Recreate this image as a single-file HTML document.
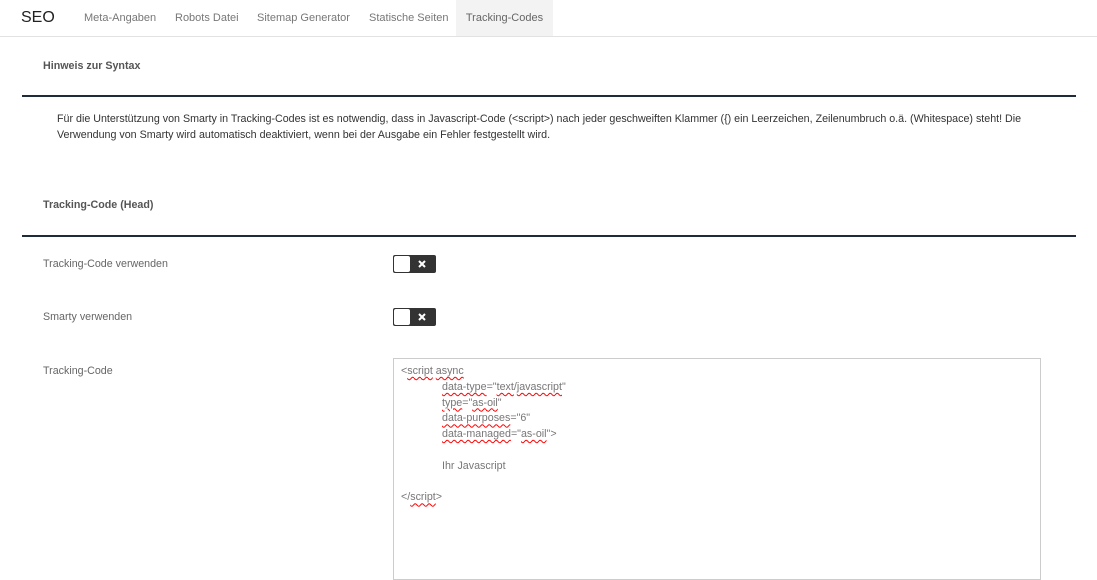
<!DOCTYPE html>
<html><head><style>
body{margin:0;width:1097px;height:572px;overflow:hidden;background:#fff;font-family:"Liberation Sans",sans-serif;color:#666;font-size:10.7px;position:relative}
.a{position:absolute;white-space:nowrap}
.nav{position:absolute;left:0;top:0;width:1097px;height:36px;border-bottom:1px solid #e2e2e2}
.tab{position:absolute;top:0;height:36px;line-height:36px;font-size:11px;color:#777}
.h{font-weight:bold;color:#555;font-size:10.7px}
.line{position:absolute;left:22px;width:1054px;height:2px;background:#1d2b3a}
.tg{position:absolute;left:393px;width:43px;height:18px;background:#333;border-radius:2px}
.tg:before{content:"";position:absolute;left:1px;top:1px;width:16px;height:16px;background:#fff;border-radius:2px}
.tg svg{position:absolute;left:25px;top:5px}
.ta{position:absolute;left:393px;top:358px;width:646px;height:220px;border:1px solid #ccc;font-size:10.7px;color:#777;line-height:15.8px}
.w{text-decoration:underline wavy red;text-decoration-thickness:1px;text-underline-offset:2px}
.i{padding-left:41px}
</style></head><body>
<div class="nav"></div>
<div class="a" style="left:21px;top:9px;font-size:16px;color:#222">SEO</div>
<div class="tab" style="left:84px">Meta-Angaben</div>
<div class="tab" style="left:175px">Robots Datei</div>
<div class="tab" style="left:257px">Sitemap Generator</div>
<div class="tab" style="left:369px">Statische Seiten</div>
<div class="tab" style="left:456px;width:97px;background:#f3f3f3;text-align:center;color:#666">Tracking-Codes</div>
<div class="a h" style="left:43px;top:60px">Hinweis zur Syntax</div>
<div class="line" style="top:95px"></div>
<div class="a" style="left:57px;top:111px;line-height:16px;color:#333;white-space:normal;width:975px">Für die Unterstützung von Smarty in Tracking-Codes ist es notwendig, dass in Javascript-Code (&lt;script&gt;) nach jeder geschweiften Klammer ({) ein Leerzeichen, Zeilenumbruch o.ä. (Whitespace) steht! Die Verwendung von Smarty wird automatisch deaktiviert, wenn bei der Ausgabe ein Fehler festgestellt wird.</div>
<div class="a h" style="left:43px;top:199px">Tracking-Code (Head)</div>
<div class="line" style="top:235px"></div>
<div class="a" style="left:43px;top:258px">Tracking-Code verwenden</div>
<div class="tg" style="top:255px"><svg width="8" height="8"><path d="M1 1L7 7M7 1L1 7" stroke="#fff" stroke-width="2"/></svg></div>
<div class="a" style="left:43px;top:311px">Smarty verwenden</div>
<div class="tg" style="top:308px"><svg width="8" height="8"><path d="M1 1L7 7M7 1L1 7" stroke="#fff" stroke-width="2"/></svg></div>
<div class="a" style="left:43px;top:365px">Tracking-Code</div>
<div class="ta"><div style="position:absolute;left:7px;top:5px;white-space:pre">&lt;<span class="w">script</span> <span class="w">async</span>
<span class="i"></span><span class="w">data-type</span>="<span class="w">text</span>/<span class="w">javascript</span>"
<span class="i"></span><span class="w">type</span>="<span class="w">as-oil</span>"
<span class="i"></span><span class="w">data-purposes</span>="6"
<span class="i"></span><span class="w">data-managed</span>="<span class="w">as-oil</span>"&gt;

<span class="i"></span>Ihr Javascript

&lt;/<span class="w">script</span>&gt;</div></div>
</body></html>
